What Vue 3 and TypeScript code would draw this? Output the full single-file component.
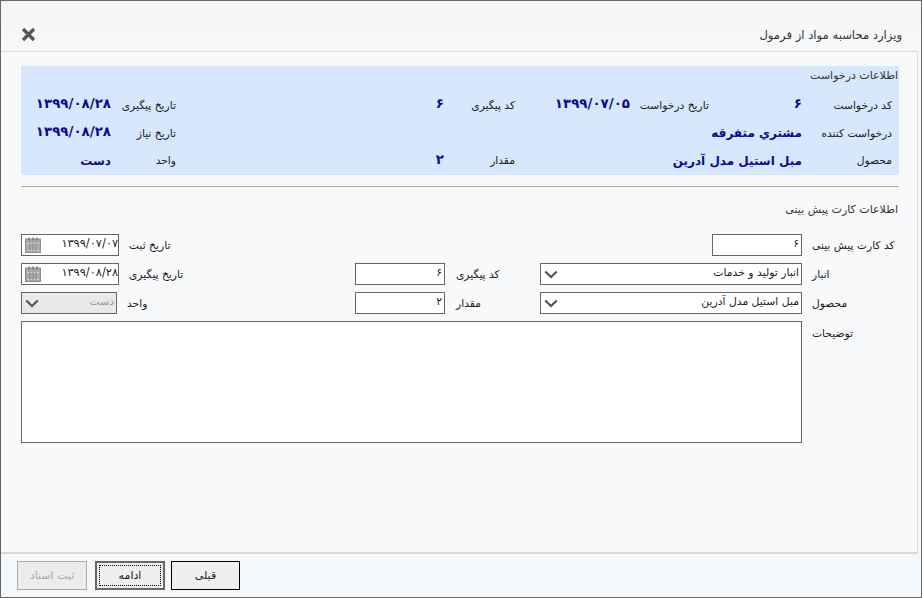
<script setup lang="ts">
interface Info { label: string; value: string; num?: boolean }
const infoRows: Info[][] = [
  [
    { label: 'کد درخواست', value: '۶', num: true },
    { label: 'تاریخ درخواست', value: '۱۳۹۹/۰۷/۰۵', num: true },
    { label: 'کد پیگیری', value: '۶', num: true },
    { label: 'تاریخ پیگیری', value: '۱۳۹۹/۰۸/۲۸', num: true },
  ],
  [
    { label: 'درخواست کننده', value: 'مشتري متفرقه' },
    { label: '', value: '' },
    { label: '', value: '' },
    { label: 'تاریخ نیاز', value: '۱۳۹۹/۰۸/۲۸', num: true },
  ],
  [
    { label: 'محصول', value: 'مبل استیل مدل آدرین' },
    { label: '', value: '' },
    { label: 'مقدار', value: '۲', num: true },
    { label: 'واحد', value: 'دست' },
  ],
]
</script>

<template>
  <div class="window" dir="rtl">
    <header class="head">
      <span class="title">ویزارد محاسبه مواد از فرمول</span>
      <button class="close" type="button" aria-label="بستن">
        <svg width="15" height="15" viewBox="0 0 15 15">
          <path d="M2 2L13 13M13 2L2 13" stroke="#555" stroke-width="3.2" fill="none" />
        </svg>
      </button>
    </header>

    <main class="body">
      <section class="info">
        <h2 class="info-title">اطلاعات درخواست</h2>
        <div v-for="(row, r) in infoRows" :key="r" class="info-row" :class="`r${r}`">
          <template v-for="(cell, c) in row" :key="c">
            <span class="info-label">{{ cell.label }}</span>
            <span class="info-value" :class="{ num: cell.num }">{{ cell.value }}</span>
          </template>
        </div>
      </section>

      <hr class="divider" />

      <h2 class="form-title">اطلاعات کارت پیش بینی</h2>

      <form class="form" @submit.prevent>
        <label class="lbl">کد کارت پیش بینی</label>
        <input class="field short" value="۶" />
        <span></span><span></span>
        <label class="lbl">تاریخ ثبت</label>
        <div class="date">
          <input class="field wide tight" value="۱۳۹۹/۰۷/۰۷" />
          <svg class="cal" width="16" height="16" viewBox="0 0 16 16">
            <rect x="0.5" y="2" width="15" height="13.5" fill="#a9a9a9" stroke="#8d8d8d" />
            <rect x="2" y="6" width="12" height="8" fill="#d6d6d6" />
            <path d="M2 8H14M2 10H14M2 12H14M5 6V14M8 6V14M11 6V14" stroke="#858585" stroke-width="1" />
            <path d="M4 0.5V3.5M8 0.5V3.5M12 0.5V3.5" stroke="#777" stroke-width="1.4" />
          </svg>
        </div>

        <label class="lbl">انبار</label>
        <div class="sel">
          <select class="field wide"><option>انبار تولید و خدمات</option></select>
          <svg class="chev" width="14" height="9" viewBox="0 0 14 9"><path d="M1.2 1.5L7 7L12.8 1.5" stroke="#555" stroke-width="2.2" fill="none" /></svg>
        </div>
        <label class="lbl lbl2">کد پیگیری</label>
        <input class="field wide" value="۶" />
        <label class="lbl">تاریخ پیگیری</label>
        <div class="date">
          <input class="field wide tight" value="۱۳۹۹/۰۸/۲۸" />
          <svg class="cal" width="16" height="16" viewBox="0 0 16 16">
            <rect x="0.5" y="2" width="15" height="13.5" fill="#a9a9a9" stroke="#8d8d8d" />
            <rect x="2" y="6" width="12" height="8" fill="#d6d6d6" />
            <path d="M2 8H14M2 10H14M2 12H14M5 6V14M8 6V14M11 6V14" stroke="#858585" stroke-width="1" />
            <path d="M4 0.5V3.5M8 0.5V3.5M12 0.5V3.5" stroke="#777" stroke-width="1.4" />
          </svg>
        </div>

        <label class="lbl">محصول</label>
        <div class="sel">
          <select class="field wide"><option>مبل استیل مدل آدرین</option></select>
          <svg class="chev" width="14" height="9" viewBox="0 0 14 9"><path d="M1.2 1.5L7 7L12.8 1.5" stroke="#555" stroke-width="2.2" fill="none" /></svg>
        </div>
        <label class="lbl lbl2">مقدار</label>
        <input class="field wide" value="۲" />
        <label class="lbl unit">واحد</label>
        <div class="sel unit-sel">
          <select class="field wide" disabled><option>دست</option></select>
          <svg class="chev" width="14" height="9" viewBox="0 0 14 9"><path d="M1.2 1.5L7 7L12.8 1.5" stroke="#555" stroke-width="2.2" fill="none" /></svg>
        </div>

        <label class="lbl notes-lbl">توضیحات</label>
        <textarea class="field notes"></textarea>
      </form>
    </main>

    <footer class="foot">
      <button class="btn plain" type="button">قبلی</button>
      <button class="btn focus" type="button"><span>ادامه</span></button>
      <button class="btn off" type="button" disabled>ثبت اسناد</button>
    </footer>
  </div>
</template>

<style>
html, body { margin: 0; padding: 0; }
</style>

<style scoped>
* { box-sizing: border-box; }
.window {
  width: 922px;
  height: 598px;
  display: flex;
  flex-direction: column;
  border: 1px solid #666;
  background: #f5f8fa;
  color: #1c1c1c;
  font-family: "DejaVu Sans", sans-serif;
  font-size: 10.7px;
}
.head {
  height: 50px;
  flex: none;
  display: flex;
  justify-content: space-between;
  align-items: flex-end;
  padding: 0 19px 8px 20px;
  background: linear-gradient(#f3f5f7, #f6f8fa);
}
.title { font-size: 11.6px; line-height: 16px; color: #333; }
.close { width: 15px; height: 15px; margin-bottom: 1px; padding: 0; border: 0; background: none; display: block; }
.close svg { display: block; }
.body {
  flex: 1;
  width: 917px;
  align-self: flex-end;
  border-top: 1px solid #dcdcdc;
  border-right: 1px solid #dcdcdc;
  border-bottom: 2px solid #d8d8d8;
  background: #f8f9fb;
  padding: 14px 18px 0 20px;
}
.info {
  height: 109px;
  background: #d6e7fe;
}
.info-title {
  margin: 0;
  height: 24px;
  padding: 1px 1px 0 0;
  font-size: 11px;
  font-weight: 400;
  line-height: 17px;
  color: #333;
}
.info-row {
  display: grid;
  grid-template-columns: 97px 93px 79px 115px 71px 268px 65px 1fr;
  align-items: center;
  height: 28px;
}
.info-row.r0 { margin-top: 1px; }
.info-row.r2 { height: 27px; }
.info-label { padding-right: 7px; white-space: nowrap; }
.info-label:nth-child(n+3) { padding-right: 0; }
.info-value { font-size: 12px; font-weight: 700; color: #0a0a96; white-space: nowrap; }
.info-value.num { font-size: 13.4px; line-height: 14px; margin-top: -2px; }
.divider { margin: 11px 0 0; border: 0; border-top: 1px solid #aaa; height: 0; }
.form-title {
  margin: 14px 1px 0 0;
  height: 17px;
  font-size: 11px;
  font-weight: 400;
  line-height: 17px;
  color: #333;
}
.form {
  margin-top: 16px;
  display: grid;
  grid-template-columns: 97px 262px 95px 90px 236px 98px;
  grid-auto-rows: 22px;
  row-gap: 7px;
}
.lbl {
  display: block;
  text-align: left;
  line-height: 24px;
  white-space: nowrap;
  padding-left: 10px;
}
.lbl2 { padding-left: 11px; }
.lbl.unit { padding-left: 8px; }
.field {
  display: block;
  height: 22px;
  border: 1px solid #666;
  border-radius: 0;
  background: #fff;
  font: inherit;
  font-size: 10.8px;
  color: #1c1c1c;
  padding: 0 2px 4px;
  margin: 0;
  outline: none;
}
.tight { padding-right: 0; font-size: 11.4px; }
.short { width: 90px; }
.wide { width: 100%; }
.date, .sel { position: relative; height: 22px; }
.cal { position: absolute; left: 4px; top: 3px; }
.sel select { appearance: none; -webkit-appearance: none; }
.chev { position: absolute; left: 4px; top: 7px; pointer-events: none; }
.unit-sel { width: 96px; justify-self: end; }
.unit-sel select { background: #e9e9e9; color: #999; opacity: 1; }
.notes-lbl { line-height: 26px; }
.notes {
  grid-column: 2 / 7;
  height: 122px;
  resize: none;
}
.foot {
  height: 43px;
  flex: none;
  display: flex;
  direction: ltr;
  flex-direction: row-reverse;
  justify-content: flex-end;
  align-items: flex-start;
  padding: 7px 0 0 16px;
}
.btn {
  height: 29px;
  width: 70px;
  padding: 0;
  border: 1px solid #000;
  border-radius: 0;
  background: #efefef;
  font: inherit;
  font-size: 11px;
  color: #1c1c1c;
}
.plain { width: 69px; margin-left: 6px; }
.focus { border: 2px solid #666; padding: 2px; margin-left: 8px; }
.focus span {
  display: flex;
  align-items: center;
  justify-content: center;
  height: 100%;
  border: 1px dotted #000;
}
.off { border-color: #aaa; color: #aaa; background: #ececec; }
</style>
